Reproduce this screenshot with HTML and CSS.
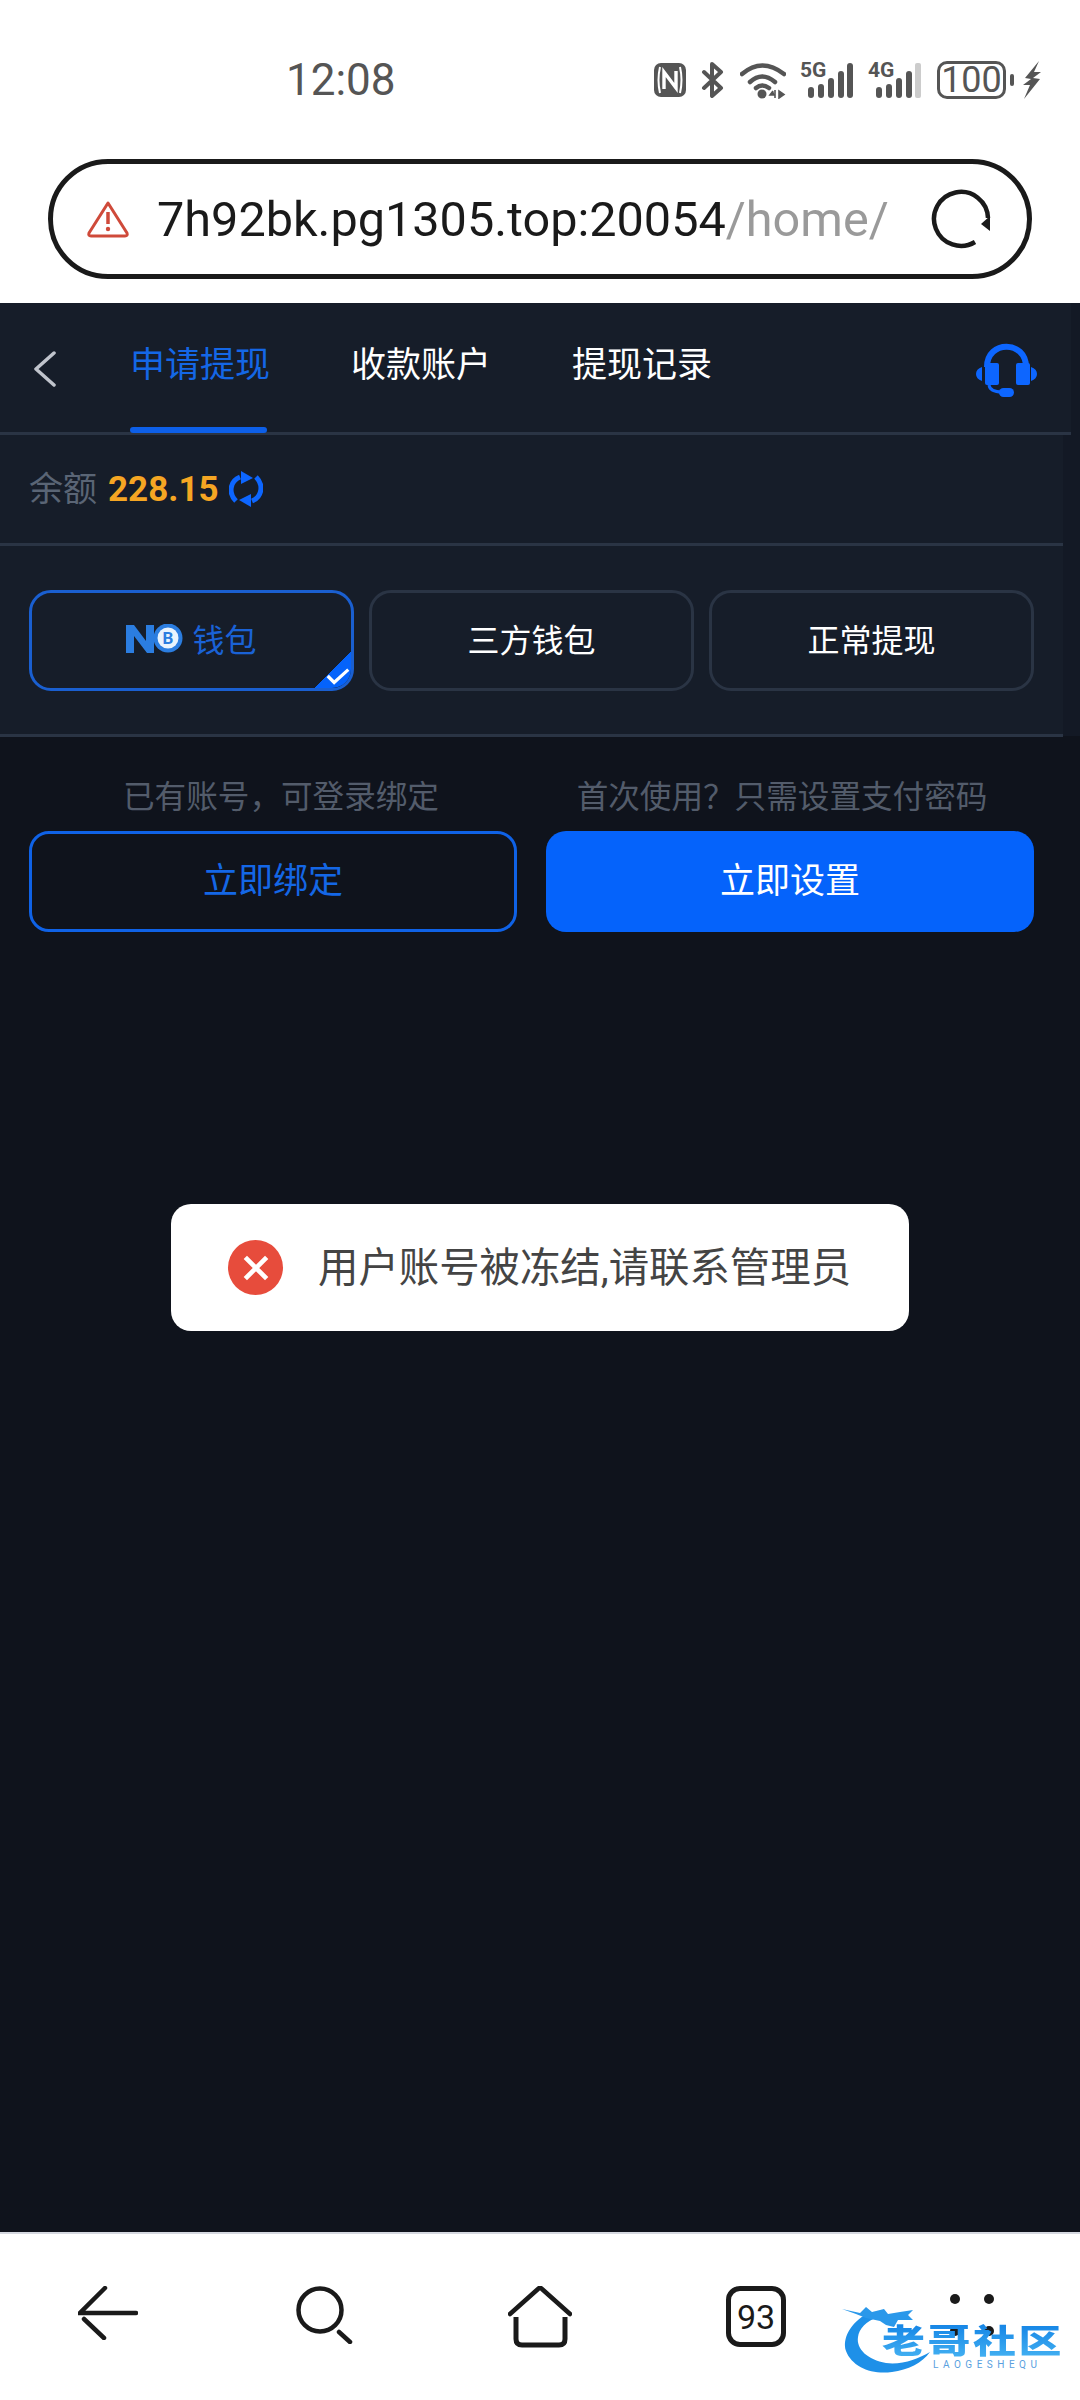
FILE: index.html
```html
<!DOCTYPE html>
<html lang="zh-CN">
<head>
    <meta charset="UTF-8">
    <title>申请提现</title>
    <link rel="stylesheet" href="styles.css">
</head>
<body>
    <div class="browser-top">
        <div class="statusbar">
            <span class="clock">12:08</span>
            <div class="status-icons">
                <svg class="ic-nfc" width="32" height="34" viewBox="0 0 32 34">
                    <rect width="32" height="34" rx="7" fill="#555"/>
                    <path d="M6 4Q3 17 6 30M26 4Q29 17 26 30" stroke="#fff" stroke-width="2" fill="none"/>
                    <path d="M10 26V9L22 25V8" stroke="#fff" stroke-width="3.4" fill="none"/>
                </svg>
                <svg class="ic-bt" width="24" height="36" viewBox="0 0 24 36">
                    <path d="M3 10L20 26L11 34V2L20 10L3 26" stroke="#555" stroke-width="4" fill="none" stroke-linejoin="round" stroke-linecap="round"/>
                </svg>
                <svg class="ic-wifi" width="46" height="37" viewBox="0 0 46 37">
                    <path d="M2 12Q22 -5 44 12M10 20Q22 9 35 20M16 26Q22 21 29 26" stroke="#555" stroke-width="4.5" fill="none" stroke-linecap="round"/>
                    <circle cx="22" cy="32" r="4.5" fill="#555"/>
                    <path d="M33 29L30 33H35M35 28V36M39 29V36L44 32.500Z" stroke="#555" stroke-width="1.600" fill="#555"/>
                </svg>
                <div class="signal">
                    <span class="signal-tag">5G</span>
                    <svg width="54" height="36" viewBox="0 0 54 36">
                        <g fill="#555">
                            <rect x="8" y="25" width="6" height="11" rx="3"/>
                            <rect x="18" y="22" width="6" height="14" rx="3"/>
                            <rect x="28" y="16" width="6" height="20" rx="3"/>
                            <rect x="38" y="9" width="6" height="27" rx="3"/>
                            <rect x="47" y="1" width="6" height="35" rx="3"/>
                        </g>
                    </svg>
                </div>
                <div class="signal">
                    <span class="signal-tag">4G</span>
                    <svg width="54" height="36" viewBox="0 0 54 36">
                        <g fill="#555">
                            <rect x="8" y="25" width="6" height="11" rx="3"/>
                            <rect x="18" y="22" width="6" height="14" rx="3"/>
                            <rect x="28" y="16" width="6" height="20" rx="3"/>
                            <rect x="38" y="9" width="6" height="27" rx="3"/>
                        </g>
                        <rect x="47" y="1" width="6" height="35" rx="2" fill="#ccc"/>
                    </svg>
                </div>
                <div class="battery"><span class="battery-level">100</span></div>
                <span class="battery-nub"></span>
                <svg class="ic-bolt" width="20" height="38" viewBox="0 0 18 38">
                    <path d="M16 0L2 17L8 18L0 24L7 24L1 38L17 18L10 17L18 11L11 11Z" fill="#555"/>
                </svg>
            </div>
        </div>
        <div class="urlbar">
            <svg class="url-warn" width="44" height="38" viewBox="0 0 44 38">
                <path d="M22 3L41 33Q42 36 39 36H5Q2 36 3 33Z" stroke="#cf4a3a" stroke-width="3" fill="none" stroke-linejoin="round"/>
                <path d="M22 12V24" stroke="#cf4a3a" stroke-width="3.500"/>
                <circle cx="22" cy="29" r="2.200" fill="#cf4a3a"/>
            </svg>
            <div class="url-text">7h92bk.pg1305.top:20054<span class="url-path">/home/</span></div>
            <svg class="url-reload" width="60" height="60" viewBox="0 0 60 60">
                <path d="M57 29A27 27 0 1 0 44 53" stroke="#1a1a1a" stroke-width="4.500" fill="none"/>
                <path d="M59 27V42L50 35Z" fill="#1a1a1a"/>
            </svg>
        </div>
    </div>

    <div class="page">
        <div class="panel">
            <div class="topnav">
                <svg class="nav-back" width="24" height="36" viewBox="0 0 24 36">
                    <path d="M21 2L3 18L21 34" stroke="#c0c4cc" stroke-width="3.500" fill="none" stroke-linecap="round" stroke-linejoin="round"/>
                </svg>
                <a class="nav-tab active">申请提现</a>
                <a class="nav-tab">收款账户</a>
                <a class="nav-tab">提现记录</a>
                <svg class="nav-support" width="61" height="54" viewBox="0 0 61 54">
                    <path d="M11 24C11 -3 50 -3 50 24" stroke="#0d66ff" stroke-width="6" fill="none"/>
                    <rect x="9" y="20" width="14" height="22" rx="2" fill="#0d66ff"/>
                    <rect x="40" y="20" width="14" height="22" rx="2" fill="#0d66ff"/>
                    <path d="M6 24V38Q0 36 0 31Q0 26 6 24ZM55 24V38Q61 36 61 31Q61 26 55 24Z" fill="#0d66ff"/>
                    <path d="M13 42Q14 49 26 49" stroke="#0d66ff" stroke-width="3" fill="none"/>
                    <rect x="23" y="45" width="15" height="9" rx="4.500" fill="#0d66ff"/>
                </svg>
            </div>
            <div class="balance">
                <span class="balance-label">余额</span>
                <span class="balance-value">228.15</span>
                <svg width="34" height="36" viewBox="0 0 34 36">
                    <path d="M7 30C-1 22 1 10 11 6" stroke="#0d66ff" stroke-width="5" fill="none"/>
                    <path d="M12 0L24 7L12 13Z" fill="#0d66ff"/>
                    <path d="M27 6C35 14 33 26 23 30" stroke="#0d66ff" stroke-width="5" fill="none"/>
                    <path d="M22 23L10 29L22 36Z" fill="#0d66ff"/>
                </svg>
            </div>
            <div class="methods">
                <div class="method selected">
                    <svg class="method-logo" width="58" height="30" viewBox="0 0 58 30">
                        <path d="M0 1H8L20 17V1H28V29H21L8 12V29H0Z" fill="#2b7de0"/>
                        <circle cx="42" cy="14" r="14.500" fill="#2b7de0"/>
                        <circle cx="42" cy="14" r="10.500" fill="#e9f3fd"/>
                        <text class="logo-coin" x="42" y="20" text-anchor="middle">B</text>
                    </svg>
                    <span class="method-name">钱包</span>
                    <svg class="method-check" width="34" height="24" viewBox="0 0 20 14">
                        <path d="M2 7L7 12L18 2" stroke="#fff" stroke-width="2.500" fill="none"/>
                    </svg>
                </div>
                <div class="method"><span class="method-name">三方钱包</span></div>
                <div class="method"><span class="method-name">正常提现</span></div>
            </div>
        </div>

        <div class="bind">
            <div class="bind-col">
                <p class="bind-hint hint-left">已有账号，可登录绑定</p>
                <button class="btn btn-outline">立即绑定</button>
            </div>
            <div class="bind-col">
                <p class="bind-hint hint-right">首次使用？只需设置支付密码</p>
                <button class="btn btn-solid">立即设置</button>
            </div>
        </div>

        <div class="toast">
            <span class="toast-icon">
                <svg width="32" height="32" viewBox="0 0 24 24">
                    <path d="M4 4L20 20M20 4L4 20" stroke="#fff" stroke-width="3.500"/>
                </svg>
            </span>
            <span class="toast-text">用户账号被冻结,请联系管理员</span>
        </div>
    </div>

    <div class="bottombar">
        <svg width="60" height="54" viewBox="0 0 60 54">
            <path d="M27 2L2 27H58M6 33L26 52" stroke="#1a1a1a" stroke-width="4.500" fill="none" stroke-linecap="round"/>
        </svg>
        <svg width="57" height="58" viewBox="0 0 57 58">
            <circle cx="24" cy="24" r="21.500" stroke="#1a1a1a" stroke-width="4.500" fill="none"/>
            <path d="M43 46L54 56" stroke="#1a1a1a" stroke-width="4.500" stroke-linecap="round"/>
        </svg>
        <svg width="64" height="62" viewBox="0 0 64 62">
            <path d="M2 28L30 3Q32 1 34 3L62 28" stroke="#1a1a1a" stroke-width="4.500" fill="none" stroke-linecap="round"/>
            <path d="M8 31V53Q8 59 14 59H51Q57 59 57 53V31" stroke="#1a1a1a" stroke-width="5" fill="none"/>
        </svg>
        <div class="tabcount">93</div>
        <div class="more-dots">
            <i></i><i></i><i></i><i></i>
        </div>
    </div>

    <div class="watermark">
        <svg class="wm-dragon" width="92" height="70" viewBox="0 0 92 70">
            <path d="M26 8C8 18 0 34 4 46C10 62 30 70 50 67C66 65 80 58 88 47C76 54 60 60 44 58C26 55 14 44 16 32C17 24 24 16 36 12Z" fill="#1e90e8"/>
            <path d="M0 4L18 8L24 2L30 7L42 4L46 9L58 7L71 5L66 10L71 15L56 15L52 22L44 20L38 16L24 13L14 9Z" fill="#2a98ea"/>
        </svg>
        <span class="wm-name">老哥社区</span>
        <span class="wm-sub">LAOGESHEQU</span>
    </div>
</body>
</html>
```

FILE: styles.css
```css
* {
    margin: 0;
    padding: 0;
    box-sizing: border-box;
}

body {
    width: 1080px;
    height: 2400px;
    display: flex;
    flex-direction: column;
    position: relative;
    overflow: hidden;
    font-family: Roboto, "Noto Sans CJK SC", sans-serif;
    background: #fff;
}

/* phone + browser chrome */
.browser-top {
    height: 303px;
    background: #fff;
}

.statusbar {
    height: 159px;
    padding: 60px 38px 0 286px;
    display: flex;
    justify-content: space-between;
    align-items: flex-start;
}

.clock {
    font-size: 44px;
    line-height: 40px;
    color: #555;
}

.status-icons {
    display: flex;
    align-items: center;
    height: 40px;
}

.ic-nfc { margin-right: 15px; }
.ic-bt { margin-right: 15px; }
.ic-wifi { margin-right: 14px; }

.signal {
    position: relative;
    width: 54px;
    height: 36px;
    margin-right: 14px;
}

.signal-tag {
    position: absolute;
    left: 0;
    top: -3px;
    font-size: 21px;
    line-height: 22px;
    font-weight: 700;
    color: #555;
}

.battery {
    width: 69px;
    height: 38px;
    border: 3px solid #555;
    border-radius: 10px;
    display: flex;
    align-items: center;
    justify-content: center;
    margin-left: 1px;
}

.battery-level {
    font-size: 36px;
    line-height: 32px;
    color: #555;
}

.battery-nub {
    width: 4px;
    height: 12px;
    margin: 0 8px 0 4px;
    background: #555;
    border-radius: 2px;
}

.urlbar {
    width: 984px;
    height: 120px;
    margin-left: 48px;
    border: 5px solid #1a1a1a;
    border-radius: 60px;
    display: flex;
    align-items: center;
    padding-left: 33px;
}

.url-warn {
    flex: none;
    margin-right: 27px;
}

.url-text {
    width: 734px;
    padding-top: 2px;
    font-size: 48.6px;
    line-height: 60px;
    color: #1a1a1a;
    white-space: nowrap;
}

.url-path {
    color: #9a9a9a;
}

.url-reload {
    flex: none;
    margin-left: 40px;
}

/* app */
.page {
    flex: 1;
    position: relative;
    background: #0f131c;
}

.panel {
    height: 433px;
    background: #131925;
}

.topnav {
    width: 1071px;
    height: 132px;
    background: #161d29;
    border-bottom: 3px solid #2a3444;
    display: flex;
    align-items: flex-start;
    padding: 47px 0 0 33px;
}

.nav-back {
    margin: 1px 73px 0 0;
}

.nav-tab {
    position: relative;
    width: 136px;
    margin-right: 85px;
    font-size: 35px;
    line-height: 32px;
    color: #fff;
    white-space: nowrap;
}

.nav-tab.active {
    color: #1467e6;
}

.nav-tab.active::after {
    content: "";
    position: absolute;
    left: 0;
    right: -1px;
    top: 77px;
    height: 6px;
    border-radius: 3px;
    background: #0d5fe8;
}

.nav-support {
    margin: -7px 0 0 183px;
    flex: none;
}

.balance {
    width: 1063px;
    height: 111px;
    background: #161d29;
    border-bottom: 3px solid #2a3444;
    display: flex;
    align-items: center;
    padding-left: 29px;
}

.balance-label {
    font-size: 34px;
    color: #5a6575;
    margin: -5px 11px 0 0;
}

.balance-value {
    font-size: 35px;
    font-weight: 700;
    color: #f5a623;
    margin-right: 10px;
}

.methods {
    width: 1063px;
    height: 191px;
    background: #161d29;
    border-bottom: 3px solid #2a3444;
    display: flex;
    gap: 15px;
    padding: 44px 0 0 29px;
}

.method {
    position: relative;
    width: 325px;
    height: 101px;
    border: 3px solid #2a3444;
    border-radius: 22px;
    display: flex;
    align-items: center;
    justify-content: center;
    font-size: 32px;
    color: #fff;
    overflow: hidden;
}

.method-name {
    margin-top: -5px;
}

.method.selected {
    border-color: #1a5fd0;
    color: #1a62d6;
    gap: 8px;
}

.method.selected::after {
    content: "";
    position: absolute;
    right: -3px;
    bottom: -3px;
    width: 42px;
    height: 42px;
    background: linear-gradient(135deg, transparent 50%, #0563fb 50%);
}

.method-logo {
    flex: none;
    margin-top: -3px;
}

.logo-coin {
    font-size: 17px;
    font-weight: 700;
    fill: #2b7de0;
}

.method-check {
    position: absolute;
    right: 0;
    bottom: 3px;
    z-index: 1;
    width: 26px;
    height: 18px;
}

.bind {
    display: flex;
    gap: 29px;
    padding: 44px 46px 0 29px;
}

.bind-col {
    width: 488px;
    text-align: center;
}

.bind-hint {
    font-size: 31.6px;
    line-height: 36px;
    color: #535c6b;
    margin-bottom: 15px;
}

.hint-left { padding-left: 16px; }
.hint-right { padding-right: 16px; }

.btn {
    display: block;
    width: 100%;
    height: 101px;
    border-radius: 20px;
    font-family: inherit;
    font-size: 35px;
    padding-bottom: 9px;
}

.btn-outline {
    background: transparent;
    border: 3px solid #0f62e6;
    color: #1467e6;
}

.btn-solid {
    background: #0563fb;
    border: none;
    color: #fff;
}

.toast {
    position: absolute;
    left: 171px;
    top: 901px;
    width: 738px;
    height: 127px;
    background: #fff;
    border-radius: 20px;
    display: flex;
    align-items: center;
    padding-left: 57px;
}

.toast-icon {
    width: 55px;
    height: 55px;
    border-radius: 50%;
    background: #e74c3c;
    display: flex;
    align-items: center;
    justify-content: center;
    margin-right: 35px;
}

.toast-text {
    margin-top: -6px;
    font-size: 40.4px;
    color: #444;
    white-space: nowrap;
}

/* browser bottom bar */
.bottombar {
    height: 168px;
    background: #fff;
    border-top: 2px solid #d5d8e0;
    display: grid;
    grid-template-columns: repeat(5, 216px);
    justify-items: center;
    align-items: start;
    padding-top: 52px;
}

.tabcount {
    width: 60px;
    height: 61px;
    border: 5px solid #1a1a1a;
    border-radius: 14px;
    display: flex;
    align-items: center;
    justify-content: center;
    font-size: 34px;
    color: #1a1a1a;
}

.more-dots {
    display: grid;
    grid-template-columns: 10px 10px;
    gap: 22px 24px;
    margin-top: 8px;
}

.more-dots i {
    width: 10px;
    height: 10px;
    border-radius: 50%;
    background: #1a1a1a;
}

/* site watermark over the bar */
.watermark {
    position: absolute;
    left: 842px;
    top: 2305px;
    width: 225px;
    height: 70px;
}

.wm-dragon {
    position: absolute;
    left: 0;
    top: 0;
}

.wm-name {
    position: absolute;
    left: 40px;
    top: 19px;
    font-size: 33px;
    line-height: 35px;
    font-weight: 900;
    letter-spacing: 2px;
    white-space: nowrap;
    transform: scaleX(1.3);
    transform-origin: left center;
    background: linear-gradient(#1585e6, #45b2f2);
    -webkit-background-clip: text;
    color: transparent;
}

.wm-sub {
    position: absolute;
    left: 91px;
    top: 54px;
    font-size: 10px;
    line-height: 11px;
    letter-spacing: 4.500px;
    color: #5a9fe0;
    white-space: nowrap;
}
```
